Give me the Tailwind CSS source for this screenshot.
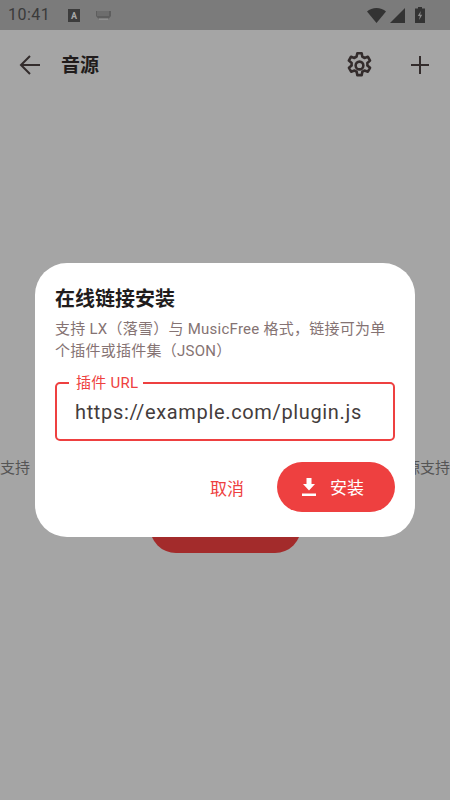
<!DOCTYPE html>
<html lang="zh">
<head>
    <meta charset="UTF-8">
    <meta name="viewport" content="width=device-width, initial-scale=1.0">
    <title>音源</title>
    <script src="https://cdn.jsdelivr.net/npm/@tailwindcss/browser@4"></script>
</head>
<body class="w-[450px] h-[800px] overflow-hidden bg-[#a5a5a5] font-['Roboto','Noto_Sans_CJK_SC',sans-serif]">
    <div class="relative w-[450px] h-[800px] overflow-hidden">
        <!-- status bar -->
        <div class="h-[30px] bg-[#7b7b7b] flex items-center pl-2 pr-[25px] text-[#333]">
            <span class="text-[16px] leading-none tracking-[0.5px] text-[#3a3a3a]">10:41</span>
            <svg class="ml-[18px]" width="12" height="13" viewBox="0 0 12 13"><rect width="12" height="13" fill="#3c3c3c"/><text x="6" y="10" text-anchor="middle" font-size="9" font-weight="700" fill="#a8a8a8" font-family="Roboto">A</text></svg>
            <svg class="ml-[15px]" width="17" height="10" viewBox="0 0 17 10"><path d="M1 1h15v5l-2 2.500H3l-2-2.500z" fill="#5e5e5e"/><path d="M3 1v5M5 1v5M7 1v5M9 1v5M11 1v5M13 1v5" stroke="#8a8a8a" stroke-width="0.700"/><rect x="4" y="8.500" width="9" height="1.500" fill="#8f8f8f"/></svg>
            <div class="ml-auto flex items-center">
                <svg width="19" height="15" viewBox="0 0 19 15"><path d="M0 3.500C2.500 1.200 5.800 0 9.500 0s7 1.200 9.500 3.500L9.500 15z" fill="#333"/></svg>
                <svg class="ml-[4px]" width="15" height="15" viewBox="0 0 15 15"><path d="M15 0v15H0z" fill="#333"/></svg>
                <svg class="ml-[10px]" width="10" height="16" viewBox="0 0 10 16"><path d="M3 0h4v1.500h3V16H0V1.500h3z" fill="#333"/><path d="M5.800 4L2.800 9h2l-.6 4 3-5.200h-2z" fill="#8a8a8a"/></svg>
            </div>
        </div>
        <!-- app bar -->
        <div class="h-[70px] flex items-center pl-[19px] pr-[21px]">
            <svg width="22" height="22" viewBox="0 0 22 22" fill="none" stroke="#332c2c" stroke-width="2"><path d="M21 11H2M11 2l-9 9 9 9"/></svg>
            <span class="ml-[20px] text-[19px] font-bold leading-none text-[#211c1c]">音源</span>
            <svg class="ml-auto" width="25" height="27" viewBox="2.500 1.500 19 21" fill="none" stroke="#332c2c" stroke-width="2" stroke-linejoin="round"><path d="M10.300 2.500h3.400l.5 2.700c.6.200 1.200.5 1.700.9l2.600-.9 1.700 3-2.100 1.800a7 7 0 0 1 0 2l2.100 1.800-1.700 3-2.600-.9c-.5.400-1.100.700-1.700.9l-.5 2.700h-3.400l-.5-2.700c-.6-.2-1.200-.5-1.700-.9l-2.600.9-1.700-3 2.100-1.800a7 7 0 0 1 0-2L3.700 8.200l1.700-3 2.600.9c.5-.4 1.100-.7 1.700-.9z"/><circle cx="12" cy="12" r="3"/></svg>
            <svg class="ml-[39px]" width="18" height="18" viewBox="0 0 18 18" fill="none" stroke="#332c2c" stroke-width="2"><path d="M9 0v18M0 9h18"/></svg>
        </div>
        <!-- page behind the scrim -->
        <span class="absolute left-0 top-[458px] text-[15px] leading-[20px] text-[#555]">支持</span>
        <span class="absolute right-0 top-[458px] whitespace-nowrap text-[15px] leading-[20px] text-[#555]">源支持</span>
        <div class="absolute left-[150px] top-[500px] w-[151px] h-[53px] rounded-[26px] bg-[#a32b2b]">
            <span class="absolute left-[52px] top-[19px] text-[16px] leading-[20px] tracking-[0.5px] text-white/80">在线安装</span>
        </div>
        <!-- dialog -->
        <div class="absolute left-[35px] top-[263px] w-[380px] h-[274px] rounded-[32px] bg-white px-[20px] pt-[24px]">
            <h2 class="text-[20px] leading-[24px] font-bold text-[#211c1c]">在线链接安装</h2>
            <p class="mt-[7px] text-[15px] leading-[22px] tracking-[0.25px] whitespace-nowrap text-[#857373]">支持 LX（落雪）与 MusicFree 格式，链接可为单<br>个插件或插件集（JSON）</p>
            <div class="relative mt-[20px] h-[59px] rounded-[5px] border-[2.5px] border-[#ee4040] flex items-center pl-[18px]">
                <span class="absolute left-[12px] top-[-9px] bg-white pl-[7px] pr-[5px] text-[15px] leading-[16px] tracking-[0.25px] text-[#ee4040]">插件 URL</span>
                <span class="text-[20px] leading-none tracking-[0.65px] text-[#443c3c]">https://example.com/plugin.js</span>
            </div>
            <div class="mt-[21px] flex items-center justify-end">
                <span class="pt-[5px] text-[17px] text-[#ee4040]">取消</span>
                <div class="ml-[33px] w-[118px] h-[50px] rounded-[25px] bg-[#ee4040] flex items-center pl-[25px] text-white">
                    <svg width="14" height="18" viewBox="0 0 14 18" fill="#fff"><path d="M4.500 0h5v6H13l-6 6.500L1 6h3.500zM0 15.500h14V18H0z"/></svg>
                    <span class="ml-[14px] pt-[3px] text-[17px]">安装</span>
                </div>
            </div>
        </div>
    </div>
</body>
</html>
